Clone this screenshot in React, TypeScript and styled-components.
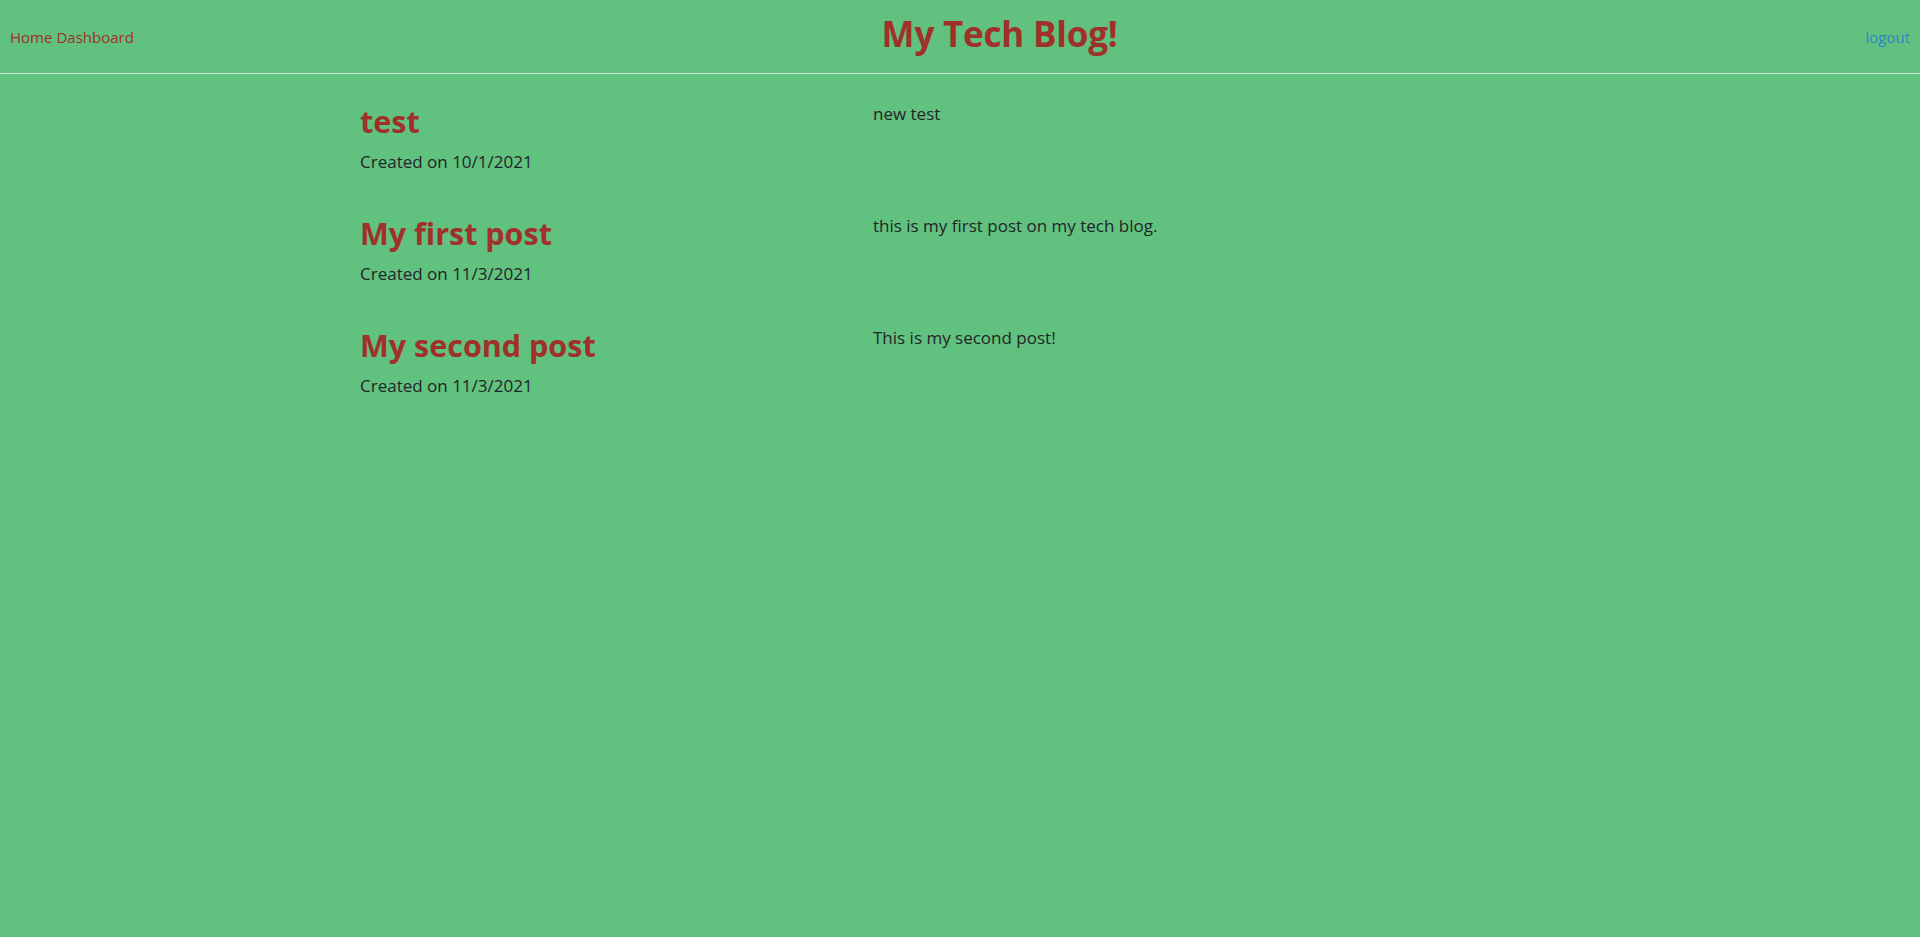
import React from "react";
import styled, { createGlobalStyle } from "styled-components";

const GlobalStyle = createGlobalStyle`
  html, body {
    margin: 0;
    padding: 0;
    background: #61c17e;
    min-height: 100%;
  }
  body {
    font-family: "Open Sans", "Noto Sans", sans-serif;
    color: #212529;
    font-size: 17px;
  }
  #root { min-height: 937px; background: #61c17e; }
`;

const Page = styled.div`
  min-height: 937px;
  background: #61c17e;
`;

const Header = styled.header`
  display: flex;
  justify-content: space-between;
  align-items: center;
  height: 73px;
  padding: 0 10px;
  border-bottom: 1px solid #d4dfd6;
`;

const Nav = styled.nav`
  display: flex;
  gap: 4px;
  padding-top: 1px;
`;

const NavLink = styled.a<{ $tone?: "red" | "blue" }>`
  color: ${(p) => (p.$tone === "blue" ? "#3182c6" : "#a0302a")};
  text-decoration: none;
  font-size: 15px;
`;

const Title = styled.h1`
  margin: 0 0 7px;
  font-size: 35px;
  font-weight: 700;
  color: #a0302a;
  letter-spacing: -0.2px;
`;

const Main = styled.main`
  width: 1200px;
  margin: 0 auto;
  padding-top: 29px;
`;

const PostRow = styled.article`
  display: grid;
  grid-template-columns: 513px 1fr;
  height: 112px;
`;

const PostHead = styled.div`
  display: flex;
  flex-direction: column;
`;

const PostTitle = styled.h2`
  margin: 0;
  font-size: 30.5px;
  font-weight: 700;
  line-height: 1.2;
  color: #a0302a;
`;

const PostDate = styled.p`
  margin: 10px 0 0;
  font-size: 17px;
`;

const PostBody = styled.p`
  margin: -1px 0 0;
  font-size: 17px;
`;

const posts = [
  { title: "test", date: "10/1/2021", body: "new test" },
  { title: "My first post", date: "11/3/2021", body: "this is my first post on my tech blog." },
  { title: "My second post", date: "11/3/2021", body: "This is my second post!" },
];

export default function App() {
  return (
    <Page>
      <GlobalStyle />
      <Header>
        <Nav>
          <NavLink href="#">Home</NavLink>
          <NavLink href="#">Dashboard</NavLink>
        </Nav>
        <Title>My Tech Blog!</Title>
        <Nav>
          <NavLink href="#" $tone="blue">logout</NavLink>
        </Nav>
      </Header>
      <Main>
        {posts.map((p) => (
          <PostRow key={p.title}>
            <PostHead>
              <PostTitle>{p.title}</PostTitle>
              <PostDate>Created on {p.date}</PostDate>
            </PostHead>
            <PostBody>{p.body}</PostBody>
          </PostRow>
        ))}
      </Main>
    </Page>
  );
}
